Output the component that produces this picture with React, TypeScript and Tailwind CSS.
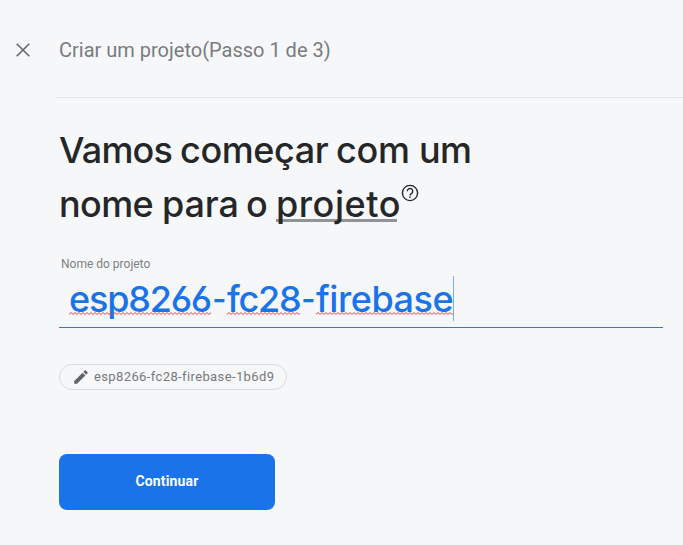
import type { ReactNode } from "react";

// A word the spell checker has marked, with its squiggle below the baseline.
function Marked({ id, className, children }: { id: string; className: string; children: ReactNode }) {
  return (
    <span className={`relative block h-[44px] whitespace-nowrap ${className}`}>
      {children}
      <svg className="absolute left-0 top-[36px] h-[3px] w-full" aria-hidden="true">
        <defs>
          <pattern id={id} width="4" height="3" patternUnits="userSpaceOnUse">
            <path d="M-1 1.5 L0 2.5 L2 .5 L4 2.5 L5 1.5" fill="none" stroke="#dc3c44" strokeWidth="1" />
          </pattern>
        </defs>
        <rect width="100%" height="3" fill={`url(#${id})`} />
      </svg>
    </span>
  );
}

export default function App() {
  return (
    <main className="flex h-[545px] w-[683px] flex-col overflow-hidden bg-[#f6f7f9] font-[Roboto,sans-serif]">
      <header className="flex h-[97px] items-start pl-[16px] pt-[36px]">
        <svg className="mt-[7px] h-[14px] w-[14px]" viewBox="0 0 14 14" fill="none" stroke="#66686a" strokeWidth="1.6" aria-label="Fechar">
          <path d="M.7.7 13.3 13.3M13.3.7.7 13.3" />
        </svg>
        <h1 className="ml-[29px] whitespace-nowrap text-[20px] leading-[28px] text-[#7a7c7e]">Criar um projeto(Passo 1 de 3)</h1>
      </header>
      <div className="ml-[55px] h-px shrink-0 bg-[#e3e4e6]" />
      <section className="flex flex-col items-start pl-[59px] pt-[25px]">
        <h2 className="font-[Inter,sans-serif] text-[36px] font-[450] leading-[54px] text-[#252628]">
          <span className="flex h-[54px] whitespace-nowrap">
            <span className="w-[121px] tracking-[-0.8px]">Vamos </span>
            <span className="w-[156px] tracking-[-0.4px]">começar </span>
            <span className="w-[83px] tracking-[-0.3px]">com </span>
            <span className="tracking-[-0.7px]">um</span>
          </span>
          <span className="flex h-[54px] whitespace-nowrap">
            <span className="w-[103px] tracking-[-0.6px]">nome </span>
            <span className="w-[84px] tracking-[-0.1px]">para </span>
            <span className="w-[30px] tracking-[-1px]">o </span>
            <span className="relative block w-[121px] tracking-[0.55px]">
              <span className="absolute bottom-[9px] left-0 h-[3px] w-full bg-[#929396]" />
              <span className="relative">projeto</span>
            </span>
            <svg className="ml-[4px] mt-[7px] h-[18px] w-[18px]" viewBox="0 0 18 18" fill="none" stroke="#252628" strokeWidth="1.4" aria-label="Ajuda">
              <circle cx="9" cy="9" r="7.6" />
              <path d="M6.3 7.3a2.7 2.7 0 1 1 4.5 1.9C9.8 10 9 10.3 9 11.6" />
              <path d="M9 12.5v1.5" />
            </svg>
          </span>
        </h2>
        <label className="ml-[2px] mt-[25px] text-[12px] leading-[16px] text-[#7d7f82]">Nome do projeto</label>
        <div className="mt-[4px] flex h-[52px] w-[604px] items-start border-b border-[#2f7fb5] pl-[10px] font-[Inter,sans-serif] text-[36px] font-medium leading-[46px] text-[#1a73e8] [font-feature-settings:'cv03']">
          <Marked id="mark-esp" className="w-[142px] tracking-[-1.2px]">esp8266</Marked>
          <span className="flex w-[16px] justify-center"><span className="origin-center scale-x-[.85]">-</span></span>
          <Marked id="mark-fc" className="w-[73px] tracking-[-1.2px]">fc28</Marked>
          <span className="flex w-[16px] justify-center"><span className="origin-center scale-x-[.85]">-</span></span>
          <Marked id="mark-firebase" className="w-[137px] tracking-[-0.45px]">firebase</Marked>
          <span className="h-[45px] w-px bg-[#82aadb]" />
        </div>
        <div className="mt-[36px] flex h-[26px] w-[228px] items-center rounded-full border border-[#d9dadd] pl-[12px] text-[13px] tracking-[0.38px] text-[#77797c]">
          <svg className="h-[18px] w-[18px]" viewBox="0 0 24 24" fill="#626468" aria-hidden="true">
            <path d="M3 17.25V21h3.75L17.81 9.94l-3.75-3.75L3 17.25zM20.71 7.04a1 1 0 0 0 0-1.41l-2.34-2.34a1 1 0 0 0-1.41 0l-1.83 1.83 3.75 3.75 1.83-1.83z" />
          </svg>
          <span className="ml-[4px] whitespace-nowrap">esp8266-fc28-firebase-1b6d9</span>
        </div>
        <button className="mt-[64px] h-[56px] w-[216px] rounded-[8px] bg-[#1a73e8] pb-[2px] text-[14px] font-bold tracking-[0.15px] text-white">Continuar</button>
      </section>
    </main>
  );
}
